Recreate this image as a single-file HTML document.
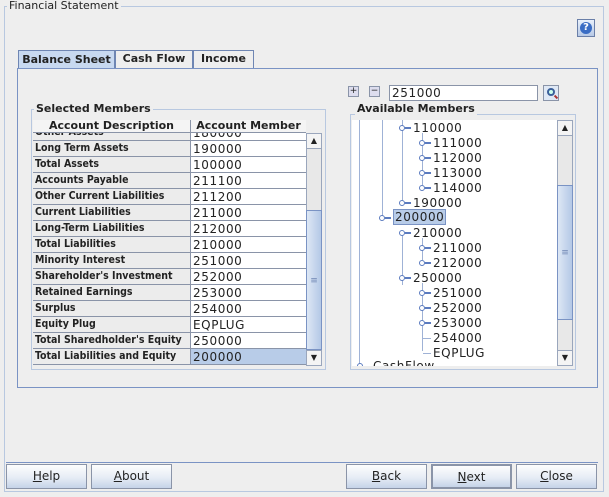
<!DOCTYPE html>
<html><head><style>
*{margin:0;padding:0;box-sizing:border-box}
body{width:609px;height:497px;background:#eeeeee;position:relative;overflow:hidden;font-family:"DejaVu Sans","Liberation Sans",sans-serif;color:#222}
.a{position:absolute}
.b{font-weight:bold;font-size:11px}
.num{font-size:12px;letter-spacing:0.6px}
.row{position:absolute;left:33px;width:273px;height:16px;border-bottom:1px solid #8a94a8}
.row .d{position:absolute;left:0;top:0;width:158px;height:15px;background:#ececec;border-right:1px solid #8a94a8;font-family:"DejaVu Sans Condensed","Liberation Sans Narrow","Liberation Sans",sans-serif;font-weight:bold;font-size:10.5px;padding-left:2px;line-height:15px;white-space:nowrap;overflow:hidden}
.row .v{position:absolute;left:158px;top:0;width:115px;height:15px;background:#fff;font-size:12px;letter-spacing:0.6px;padding-left:2px;line-height:16px}
.btn{position:absolute;top:464px;height:25px;width:81px;border:1px solid #8a94a8;background:linear-gradient(#fdfdfd,#e6ecf5 55%,#c5d3e8);font-size:12px;text-align:center;line-height:23px}
.t{position:absolute;font-size:12px;letter-spacing:0.6px;line-height:15px}
.k{position:absolute;width:6px;height:6px;border:1.5px solid #5b7bbf;border-radius:50%;background:#fff}
.hl{position:absolute;height:2px;background:#5b7bbf}
.vl{position:absolute;width:1px;background:#9fb2d6}
</style></head><body>
<div class="a" style="left:4px;top:6px;width:600px;height:450px;border:1px solid #b8c8e0;border-bottom:none"></div>
<div class="a" style="left:7px;top:0;background:#eee;padding:0 2px;font-size:11px;line-height:12px">Financial Statement</div>
<div class="a" style="left:577px;top:19px;width:18px;height:18px;border:1px solid #6a7fa8;background:linear-gradient(#e8f0fb,#b7c9e6);"><div style="position:absolute;left:2px;top:2px;width:12px;height:12px;border-radius:50%;background:#3a6dc4;color:#fff;font-size:10px;font-weight:bold;text-align:center;line-height:12px">?</div></div>
<div class="a b" style="left:18px;top:50px;width:97px;height:19px;background:#c8d9f0;border:1px solid #6f86b3;border-bottom:none;text-align:center;line-height:17px">Balance Sheet</div>
<div class="a b" style="left:115px;top:50px;width:78px;height:18px;background:#eee;border:1px solid #6f86b3;border-bottom:none;text-align:center;line-height:16px">Cash Flow</div>
<div class="a b" style="left:193px;top:50px;width:61px;height:18px;background:#eee;border:1px solid #6f86b3;border-bottom:none;text-align:center;line-height:16px">Income</div>
<div class="a" style="left:17px;top:68px;width:581px;height:320px;border:1px solid #7a93c4"></div>
<div class="a" style="left:31px;top:109px;width:295px;height:261px;border:1px solid #b8c8e0"></div>
<div class="a b" style="left:34px;top:102px;background:#eee;padding:0 2px;line-height:13px">Selected Members</div>
<div class="a" style="left:33px;top:120px;width:273px;height:13px;background:#f4f4f4;border-bottom:1px solid #8a94a8"></div>
<div class="a b" style="left:33px;top:120px;width:158px;height:13px;text-align:center;line-height:12px;border-right:1px solid #8a94a8">Account Description</div>
<div class="a b" style="left:191px;top:120px;width:115px;height:13px;text-align:center;line-height:12px">Account Member</div>
<div class="a" style="left:33px;top:133px;width:273px;height:233px;overflow:hidden">
<div style="position:relative;top:-8px">
<div class="row" style="top:0;left:0"><div class="d">Other Assets</div><div class="v">180000</div></div>
<div class="row" style="top:16px;left:0"><div class="d">Long Term Assets</div><div class="v">190000</div></div>
<div class="row" style="top:32px;left:0"><div class="d">Total Assets</div><div class="v">100000</div></div>
<div class="row" style="top:48px;left:0"><div class="d">Accounts Payable</div><div class="v">211100</div></div>
<div class="row" style="top:64px;left:0"><div class="d">Other Current Liabilities</div><div class="v">211200</div></div>
<div class="row" style="top:80px;left:0"><div class="d">Current Liabilities</div><div class="v">211000</div></div>
<div class="row" style="top:96px;left:0"><div class="d">Long-Term Liabilities</div><div class="v">212000</div></div>
<div class="row" style="top:112px;left:0"><div class="d">Total Liabilities</div><div class="v">210000</div></div>
<div class="row" style="top:128px;left:0"><div class="d">Minority Interest</div><div class="v">251000</div></div>
<div class="row" style="top:144px;left:0"><div class="d">Shareholder's Investment</div><div class="v">252000</div></div>
<div class="row" style="top:160px;left:0"><div class="d">Retained Earnings</div><div class="v">253000</div></div>
<div class="row" style="top:176px;left:0"><div class="d">Surplus</div><div class="v">254000</div></div>
<div class="row" style="top:192px;left:0"><div class="d">Equity Plug</div><div class="v">EQPLUG</div></div>
<div class="row" style="top:208px;left:0"><div class="d">Total Sharedholder's Equity</div><div class="v">250000</div></div>
<div class="row" style="top:224px;left:0"><div class="d">Total Liabilities and Equity</div><div class="v" style="background:#b8cce8">200000</div></div>
</div></div>
<div class="a" style="left:306px;top:133px;width:16px;height:233px;background:#e8e8e8;border:1px solid #9aa6bc"></div>
<div class="a" style="left:306px;top:133px;width:16px;height:16px;border:1px solid #9aa6bc;background:#f4f4f4;font-size:8px;text-align:center;line-height:14px">▲</div>
<div class="a" style="left:306px;top:210px;width:16px;height:140px;border:1px solid #7a93c4;background:linear-gradient(90deg,#dde7f5,#b4c8e6);font-size:9px;color:#6f86b3;text-align:center;line-height:140px">≡</div>
<div class="a" style="left:306px;top:350px;width:16px;height:16px;border:1px solid #9aa6bc;background:#f4f4f4;font-size:8px;text-align:center;line-height:14px">▼</div>
<div class="a" style="left:348px;top:86px;width:11px;height:11px;border:1px solid #8a94a8;background:#dde;font-size:9px;line-height:9px;text-align:center">+</div>
<div class="a" style="left:369px;top:86px;width:11px;height:11px;border:1px solid #8a94a8;background:#dde;font-size:9px;line-height:9px;text-align:center">−</div>
<div class="a num" style="left:389px;top:85px;width:149px;height:16px;border:1px solid #8a94a8;background:#fff;padding-left:2px;line-height:14px">251000</div>
<div class="a" style="left:543px;top:85px;width:16px;height:16px;border:1px solid #8a94a8;background:#dfe8f5"><div style="position:absolute;left:3px;top:2px;width:8px;height:8px;border:2px solid #3a5f9a;border-radius:50%;background:#cfe"></div><div style="position:absolute;left:10px;top:10px;width:4px;height:2px;background:#a33;transform:rotate(45deg)"></div></div>
<div class="a" style="left:350px;top:114px;width:226px;height:256px;border:1px solid #b8c8e0"></div>
<div class="a b" style="left:355px;top:102px;background:#eee;padding:0 2px;line-height:13px">Available Members</div>
<div class="a" style="left:352px;top:120px;width:205px;height:246px;background:#fff;overflow:hidden">
 <div class="vl" style="left:7px;top:0;height:246px"></div>
 <div class="vl" style="left:30px;top:0;height:96px"></div>
 <div class="vl" style="left:50px;top:0;height:82px"></div>
 <div class="vl" style="left:70px;top:13px;height:52px"></div>
 <div class="vl" style="left:50px;top:113px;height:52px"></div>
 <div class="vl" style="left:70px;top:118px;height:22px"></div>
 <div class="vl" style="left:70px;top:163px;height:68px"></div>
 <div class="k" style="left:47px;top:5px"></div><div class="hl" style="left:53px;top:7px;width:6px"></div><div class="t" style="left:61px;top:1px">110000</div>
 <div class="k" style="left:67px;top:20px"></div><div class="hl" style="left:73px;top:22px;width:6px"></div><div class="t" style="left:81px;top:16px">111000</div>
 <div class="k" style="left:67px;top:35px"></div><div class="hl" style="left:73px;top:37px;width:6px"></div><div class="t" style="left:81px;top:31px">112000</div>
 <div class="k" style="left:67px;top:50px"></div><div class="hl" style="left:73px;top:52px;width:6px"></div><div class="t" style="left:81px;top:46px">113000</div>
 <div class="k" style="left:67px;top:65px"></div><div class="hl" style="left:73px;top:67px;width:6px"></div><div class="t" style="left:81px;top:61px">114000</div>
 <div class="k" style="left:47px;top:80px"></div><div class="hl" style="left:53px;top:82px;width:6px"></div><div class="t" style="left:61px;top:76px">190000</div>
 <div class="k" style="left:27px;top:95px"></div><div class="hl" style="left:33px;top:97px;width:6px"></div><div class="t" style="left:41px;top:89px;background:#b8cce8;border:1px solid #7a93c4;height:16px;padding:0 1px">200000</div>
 <div class="k" style="left:47px;top:110px"></div><div class="hl" style="left:53px;top:112px;width:6px"></div><div class="t" style="left:61px;top:106px">210000</div>
 <div class="k" style="left:67px;top:125px"></div><div class="hl" style="left:73px;top:127px;width:6px"></div><div class="t" style="left:81px;top:121px">211000</div>
 <div class="k" style="left:67px;top:140px"></div><div class="hl" style="left:73px;top:142px;width:6px"></div><div class="t" style="left:81px;top:136px">212000</div>
 <div class="k" style="left:47px;top:155px"></div><div class="hl" style="left:53px;top:157px;width:6px"></div><div class="t" style="left:61px;top:151px">250000</div>
 <div class="k" style="left:67px;top:170px"></div><div class="hl" style="left:73px;top:172px;width:6px"></div><div class="t" style="left:81px;top:166px">251000</div>
 <div class="k" style="left:67px;top:185px"></div><div class="hl" style="left:73px;top:187px;width:6px"></div><div class="t" style="left:81px;top:181px">252000</div>
 <div class="k" style="left:67px;top:200px"></div><div class="hl" style="left:73px;top:202px;width:6px"></div><div class="t" style="left:81px;top:196px">253000</div>
 <div class="hl" style="left:71px;top:218px;width:8px;height:1px;background:#9fb2d6"></div><div class="t" style="left:81px;top:211px">254000</div>
 <div class="hl" style="left:71px;top:233px;width:8px;height:1px;background:#9fb2d6"></div><div class="t" style="left:81px;top:226px">EQPLUG</div>
 <div class="k" style="left:5px;top:243px"></div><div class="t" style="left:21px;top:239px">CashFlow</div>
</div>
<div class="a" style="left:557px;top:120px;width:16px;height:246px;background:#e8e8e8;border:1px solid #9aa6bc"></div>
<div class="a" style="left:557px;top:120px;width:16px;height:16px;border:1px solid #9aa6bc;background:#f4f4f4;font-size:8px;text-align:center;line-height:14px">▲</div>
<div class="a" style="left:557px;top:185px;width:16px;height:135px;border:1px solid #7a93c4;background:linear-gradient(90deg,#dde7f5,#b4c8e6);font-size:9px;color:#6f86b3;text-align:center;line-height:135px">≡</div>
<div class="a" style="left:557px;top:350px;width:16px;height:16px;border:1px solid #9aa6bc;background:#f4f4f4;font-size:8px;text-align:center;line-height:14px">▼</div>
<div class="a" style="left:6px;top:462px;width:592px;height:1px;background:#7a93c4"></div>
<div class="btn" style="left:6px"><u>H</u>elp</div>
<div class="btn" style="left:91px"><u>A</u>bout</div>
<div class="btn" style="left:346px"><u>B</u>ack</div>
<div class="btn" style="left:431px;border:2px solid #8a94a8"><u>N</u>ext</div>
<div class="btn" style="left:516px"><u>C</u>lose</div>
<div class="a" style="left:4px;top:456px;width:1px;height:36px;background:#b8c8e0"></div>
<div class="a" style="left:603px;top:456px;width:1px;height:36px;background:#b8c8e0"></div>
<div class="a" style="left:4px;top:491px;width:600px;height:1px;background:#b8c8e0"></div>
</body></html>
